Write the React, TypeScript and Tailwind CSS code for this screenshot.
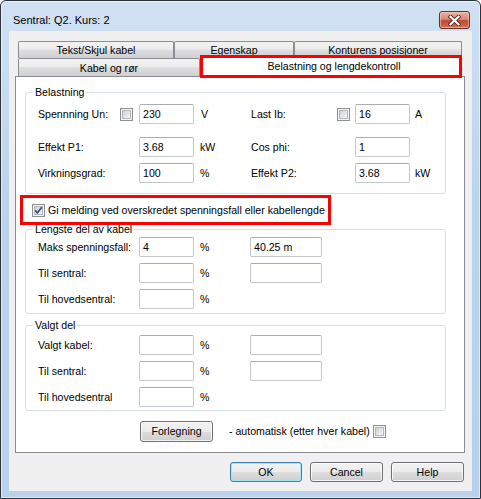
import { useId, type ReactNode } from "react";

// Win7-ish dialog: "Sentral: Q2. Kurs: 2"
const tabBg = "bg-[linear-gradient(to_bottom,#f3f3f3_0%,#ececec_45%,#dedede_50%,#d0d0d0_100%)]";
const btnBg = "bg-[linear-gradient(to_bottom,#f2f2f2_0%,#ebebeb_50%,#dddddd_51%,#cfcfcf_100%)]";

function Check(props: { checked?: boolean; className?: string }) {
  const { checked, className = "" } = props;
  const id = useId();
  return (
    <svg width="13" height="13" viewBox="0 0 13 13" className={"shrink-0 " + className}>
      <defs>
        <linearGradient id={id} x1="0" y1="0" x2="1" y2="1">
          <stop offset="0" stopColor="#cbcfd4" />
          <stop offset="1" stopColor="#f7f7f7" />
        </linearGradient>
      </defs>
      <rect x="0.5" y="0.5" width="12" height="12" fill="#f4f4f4" stroke="#8e8f8f" />
      <rect x="2.5" y="2.5" width="8" height="8" fill={`url(#${id})`} stroke="#b3b7bd" />
      {checked && (
        <path d="M3.2 6.3 L5.3 8.8 L9.8 3.2" fill="none" stroke="#3a4d92" strokeWidth="1.7" />
      )}
    </svg>
  );
}

function Field(props: { value?: string; className?: string }) {
  const { value = "", className = "w-[55px]" } = props;
  return (
    <div
      className={
        "h-[20px] shrink-0 flex items-center pl-[3px] bg-white border border-[#c3c6cb] border-t-[#abadb3] rounded-[2px] " +
        className
      }
    >
      {value}
    </div>
  );
}

function Group(props: { title: string; className?: string; children: ReactNode }) {
  const { title, className = "", children } = props;
  return (
    <fieldset className={"w-[421px] border border-[#d5dfe5] rounded-[3px] " + className}>
      <legend className="ml-[7px] px-[2px] leading-[13px]">{title}</legend>
      {children}
    </fieldset>
  );
}

function Tab(props: { label: string; className?: string }) {
  return (
    <div
      className={
        "flex items-center justify-center border-t border-x border-[#898c95] rounded-t-[2px] " +
        tabBg +
        " " +
        (props.className ?? "")
      }
    >
      {props.label}
    </div>
  );
}

function Button(props: { label: string; isDefault?: boolean; className?: string }) {
  const { label, isDefault, className = "w-[73px]" } = props;
  const edge = isDefault
    ? "border-[#3c7fb1] shadow-[inset_0_0_0_1px_#a8e4f8]"
    : "border-[#707070] shadow-[inset_0_0_0_1px_rgba(255,255,255,0.75)]";
  return (
    <div className={`h-[20px] flex items-center justify-center rounded-[3px] border ${edge} ${btnBg} ${className}`}>
      {label}
    </div>
  );
}

function LengthRows(props: { first: string; firstVal?: string; lenVal?: string; last: string }) {
  const { first, firstVal = "", lenVal = "", last } = props;
  return (
    <div className="pl-[12px] flex flex-col gap-[6px]">
      <div className="flex items-center h-[20px]">
        <span className="w-[101px]">{first}</span>
        <Field value={firstVal} />
        <span className="ml-[6px] w-[50px]">%</span>
        <Field value={lenVal} className="w-[72px]" />
      </div>
      <div className="flex items-center h-[20px]">
        <span className="w-[101px]">Til sentral:</span>
        <Field />
        <span className="ml-[6px] w-[50px]">%</span>
        <Field className="w-[72px]" />
      </div>
      <div className="flex items-center h-[20px]">
        <span className="w-[101px]">{last}</span>
        <Field />
        <span className="ml-[6px] w-[50px]">%</span>
      </div>
    </div>
  );
}

export default function App() {
  return (
    <div className="w-[481px] h-[499px] flex flex-col border border-[#2e3338] rounded-t-[6px] bg-[linear-gradient(to_bottom,#d0e1f3_0%,#bcd3ec_40%,#b9d1ea_100%)] shadow-[inset_0_0_0_1px_rgba(255,255,255,0.55)] text-[10.6px] leading-[13px] text-black font-['Liberation_Sans',Arial,sans-serif] overflow-hidden">
      {/* title bar */}
      <div className="h-[30px] shrink-0 flex justify-between items-start pl-[12px] pr-[10px]">
        <span className="pt-[12px] text-[11px] leading-[15px]">Sentral: Q2. Kurs: 2</span>
        <div className="mt-[10px] w-[31px] h-[18px] flex items-center justify-center rounded-[3px] border border-[#6f2c22] bg-[linear-gradient(to_bottom,#eab2a2_0%,#d88a74_45%,#c4452d_55%,#d0745c_100%)] shadow-[inset_0_0_0_1px_rgba(255,220,210,0.5)]">
          <svg width="13" height="11" viewBox="0 0 13 11">
            <path d="M2.5 1.8 L10.5 9.2 M10.5 1.8 L2.5 9.2" stroke="#5b2a22" strokeWidth="4" strokeLinecap="square" />
            <path d="M2.5 1.8 L10.5 9.2 M10.5 1.8 L2.5 9.2" stroke="#ffffff" strokeWidth="2.2" strokeLinecap="square" />
          </svg>
        </div>
      </div>

      {/* client area */}
      <div className="flex-1 mx-[8px] mb-[7px] bg-[#f0f0f0] pl-[6px] pt-[10px]">
        {/* two rows of tabs */}
        <div className="pl-[3px]">
          <div className="flex h-[17px]">
            <Tab label="Tekst/Skjul kabel" className="w-[156px]" />
            <Tab label="Egenskap" className="w-[120px]" />
            <Tab label="Konturens posisjoner" className="w-[168px]" />
          </div>
          <div className="flex h-[18px]">
            <Tab label="Kabel og rør" className="w-[182px] pt-[2px]" />
            <div className="relative z-10 mt-[-3px] w-[262px] h-[23px] flex items-center justify-center bg-white">
              <span className="pl-[6px]">Belastning og lengdekontroll</span>
              <div className="absolute inset-0 border-[3px] border-[#ff0000]" />
            </div>
          </div>
        </div>

        {/* tab page */}
        <div className="w-[450px] border border-[#898c95] bg-white pt-[9px] pl-[9px] pb-[10px]">
          <Group title="Belastning">
            <div className="pl-[12px] pt-[5px] pb-[10px]">
              <div className="flex items-center h-[20px]">
                <span className="w-[82px]">Spennning Un:</span>
                <Check className="mr-[6px]" />
                <Field value="230" />
                <span className="ml-[7px] w-[50px]">V</span>
                <span className="w-[86px]">Last Ib:</span>
                <Check className="mr-[5px]" />
                <Field value="16" />
                <span className="ml-[5px]">A</span>
              </div>
              <div className="flex items-center h-[20px] mt-[13px]">
                <span className="w-[101px]">Effekt P1:</span>
                <Field value="3.68" />
                <span className="ml-[6px] w-[51px]">kW</span>
                <span className="w-[104px]">Cos phi:</span>
                <Field value="1" />
              </div>
              <div className="flex items-center h-[20px] mt-[6px]">
                <span className="w-[101px]">Virkningsgrad:</span>
                <Field value="100" />
                <span className="ml-[6px] w-[51px]">%</span>
                <span className="w-[104px]">Effekt P2:</span>
                <Field value="3.68" />
                <span className="ml-[5px]">kW</span>
              </div>
            </div>
          </Group>

          <div className="relative mt-[10px] h-[13px] flex items-center">
            <Check checked className="ml-[7px]" />
            <span className="ml-[3px]">Gi melding ved overskredet spenningsfall eller kabellengde</span>
            {/* highlight box */}
            <div className="absolute left-[-5px] top-[-9px] w-[311px] h-[30px] border-[3px] border-[#ff0000]" />
          </div>

          <Group title="Lengste del av kabel" className="mt-[6px] pb-[4px]">
            <div className="pt-[1px]">
              <LengthRows first="Maks spenningsfall:" firstVal="4" lenVal="40.25 m" last="Til hovedsentral:" />
            </div>
          </Group>

          <Group title="Valgt del" className="mt-[5px] pb-[3px]">
            <div className="pt-[3px]">
              <LengthRows first="Valgt kabel:" last="Til hovedsentral" />
            </div>
          </Group>

          <div className="mt-[10px] h-[21px] flex items-center">
            <Button label="Forlegning" className="ml-[115px] w-[73px] h-[21px]" />
            <span className="ml-[16px]">- automatisk (etter hver kabel)</span>
            <Check className="ml-[3px]" />
          </div>
        </div>

        {/* dialog buttons */}
        <div className="mt-[9px] pr-[8px] flex justify-end gap-[8px]">
          <Button label="OK" isDefault className="w-[72px]" />
          <Button label="Cancel" />
          <Button label="Help" />
        </div>
      </div>
    </div>
  );
}
